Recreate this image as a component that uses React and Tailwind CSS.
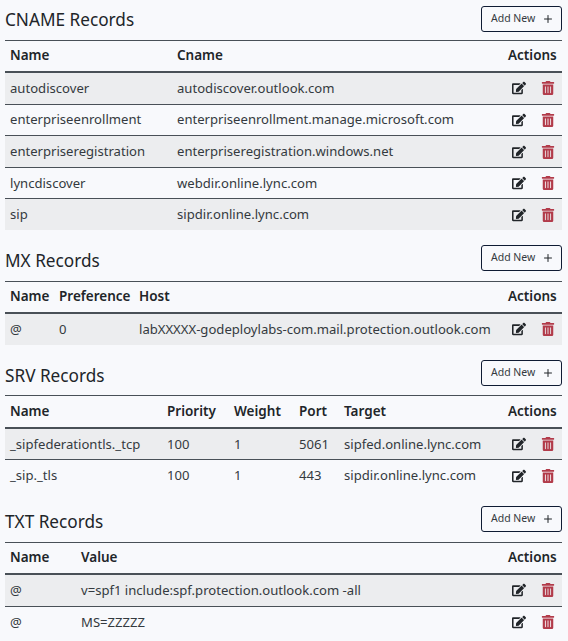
import { FaEdit, FaTrashAlt } from "react-icons/fa";
import { Plus } from "lucide-react";

const sections = [
  {
    title: "CNAME Records",
    titleClass: "pt-[2px]",
    gap: "mb-[8px]",
    columns: [
      { label: "Name", width: "w-[167px]" },
      { label: "Cname", width: "" },
    ],
    rows: [
      ["autodiscover", "autodiscover.outlook.com"],
      ["enterpriseenrollment", "enterpriseenrollment.manage.microsoft.com"],
      ["enterpriseregistration", "enterpriseregistration.windows.net"],
      ["lyncdiscover", "webdir.online.lync.com"],
      ["sip", "sipdir.online.lync.com"],
    ],
  },
  {
    title: "MX Records",
    titleClass: "pt-[6px]",
    gap: "mb-[9.5px]",
    columns: [
      { label: "Name", width: "w-[49px]" },
      { label: "Preference", width: "w-[80px]" },
      { label: "Host", width: "" },
    ],
    rows: [["@", "0", "labXXXXX-godeploylabs-com.mail.protection.outlook.com"]],
  },
  {
    title: "SRV Records",
    titleClass: "pt-[6px]",
    gap: "mb-[9.5px]",
    columns: [
      { label: "Name", width: "w-[157px]" },
      { label: "Priority", width: "w-[67px]" },
      { label: "Weight", width: "w-[65px]" },
      { label: "Port", width: "w-[45px]" },
      { label: "Target", width: "" },
    ],
    rows: [
      ["_sipfederationtls._tcp", "100", "1", "5061", "sipfed.online.lync.com"],
      ["_sip._tls", "100", "1", "443", "sipdir.online.lync.com"],
    ],
  },
  {
    title: "TXT Records",
    titleClass: "pt-[6px]",
    gap: "mb-[9.5px]",
    columns: [
      { label: "Name", width: "w-[71px]" },
      { label: "Value", width: "" },
    ],
    rows: [
      ["@", "v=spf1 include:spf.protection.outlook.com -all"],
      ["@", "MS=ZZZZZ"],
    ],
  },
];

function RecordTable({ title, titleClass, gap, columns, rows }) {
  return (
    <section className="mb-[15px]">
      <div className={`flex justify-between items-center h-[26px] ${gap}`}>
        <h2 className={`text-[17.2px] leading-[26px] text-[#212529] ${titleClass}`}>{title}</h2>
        <button className="flex items-center justify-between w-[81px] h-[26px] pl-[9px] pr-[7px] border border-[#0f1b33] rounded-[3px] text-[10.5px] text-[#343a40]">
          Add New
          <Plus size={12} strokeWidth={2} className="text-[#212529]" />
        </button>
      </div>

      <table className="w-full table-fixed border-collapse text-[13.1px] leading-[21px] text-[#343a40]">
        <thead>
          <tr className="border-t border-b-2 border-[#495057] text-[13.5px]">
            {columns.map((col) => (
              <th key={col.label} className={`${col.width} px-[5px] py-[4.8px] text-left font-semibold text-[#212529]`}>
                {col.label}
              </th>
            ))}
            <th className="w-[59px] px-[5px] py-[4.8px] text-left font-semibold whitespace-nowrap text-[#212529]">Actions</th>
          </tr>
        </thead>
        <tbody>
          {rows.map((row, i) => (
            <tr key={i} className={`border-t border-[#495057] first:border-t-0 ${i % 2 === 0 ? "bg-[#ecedef]" : ""}`}>
              {row.map((cell, j) => (
                <td key={j} className="px-[5px] py-[4.8px] whitespace-nowrap">
                  {cell}
                </td>
              ))}
              <td className="py-[4.8px]">
                <div className="flex items-center gap-[15px] pl-[9px]">
                  <FaEdit className="text-[14px] text-[#212529]" />
                  <FaTrashAlt className="text-[14px] text-[#b23b4a]" />
                </div>
              </td>
            </tr>
          ))}
        </tbody>
      </table>
    </section>
  );
}

export default function App() {
  return (
    <div className="min-h-[641px] bg-[#f8f9fc] pl-[5px] pr-[6px] pt-[5.5px] font-['Noto_Sans','Open_Sans',sans-serif] overflow-hidden">
      {sections.map((s) => (
        <RecordTable key={s.title} {...s} />
      ))}
    </div>
  );
}
